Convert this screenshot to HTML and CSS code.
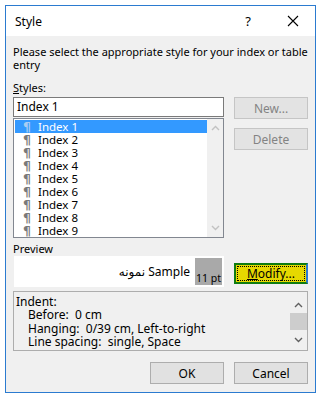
FILE: index.html
```html
<!DOCTYPE html>
<html lang="en">
<head>
    <meta charset="UTF-8">
    <meta name="viewport" content="width=device-width, initial-scale=1.0">
    <title>Style</title>
    <link rel="stylesheet" href="styles.css">
</head>
<body>
    <div class="window">
        <div class="titlebar">
            <span class="title">Style</span>
            <span class="help">?</span>
            <span class="close">
                <svg width="12" height="12" viewBox="0 0 12 12"><path d="M1 1L11 11M11 1L1 11" stroke="#000" stroke-width="1.1" fill="none"/></svg>
            </span>
        </div>
        <div class="dialog">
            <p class="intro">Please select the appropriate style for your index or table entry</p>
            <div class="label"><u>S</u>tyles:</div>
            <div class="styles-row">
                <div class="styles-col">
                    <div class="input">Index 1</div>
                    <div class="listbox">
                        <ul class="list">
                            <li class="selected"><span class="pil">¶</span>Index 1</li>
                            <li><span class="pil">¶</span>Index 2</li>
                            <li><span class="pil">¶</span>Index 3</li>
                            <li><span class="pil">¶</span>Index 4</li>
                            <li><span class="pil">¶</span>Index 5</li>
                            <li><span class="pil">¶</span>Index 6</li>
                            <li><span class="pil">¶</span>Index 7</li>
                            <li><span class="pil">¶</span>Index 8</li>
                            <li><span class="pil">¶</span>Index 9</li>
                        </ul>
                        <div class="vscroll off">
                            <svg width="9" height="6" viewBox="0 0 9 6"><path d="M1 5L4.5 1.5L8 5" stroke="currentColor" stroke-width="1.4" fill="none"/></svg>
                            <svg width="9" height="6" viewBox="0 0 9 6"><path d="M1 1L4.5 4.5L8 1" stroke="currentColor" stroke-width="1.4" fill="none"/></svg>
                        </div>
                    </div>
                </div>
                <div class="side-buttons">
                    <button class="btn" disabled>New...</button>
                    <button class="btn" disabled>Delete</button>
                </div>
            </div>
            <div class="label preview-label">Preview</div>
            <div class="preview-row">
                <div class="preview">
                    <div class="preview-text">نمونه Sample</div>
                    <div class="size">11 pt</div>
                </div>
                <button class="btn modify"><span class="focus"><u>M</u>odify...</span></button>
            </div>
            <div class="desc">
                <div class="desc-text">
                    <div>Indent:</div>
                    <div class="ind">Before:&nbsp; 0 cm</div>
                    <div class="ind">Hanging:&nbsp; 0/39 cm, Left-to-right</div>
                    <div class="ind">Line spacing:&nbsp; single, Space</div>
                </div>
                <div class="vscroll on">
                    <svg width="9" height="6" viewBox="0 0 9 6"><path d="M1 5L4.5 1.5L8 5" stroke="currentColor" stroke-width="1.4" fill="none"/></svg>
                    <div class="thumb"></div>
                    <svg width="9" height="6" viewBox="0 0 9 6"><path d="M1 1L4.5 4.5L8 1" stroke="currentColor" stroke-width="1.4" fill="none"/></svg>
                </div>
            </div>
            <div class="actions">
                <button class="btn">OK</button>
                <button class="btn">Cancel</button>
            </div>
        </div>
    </div>
</body>
</html>
```

FILE: styles.css
```css
body {
    margin: 0;
    background-color: #fff;
    font-family: "Noto Sans", "DejaVu Sans", sans-serif;
    font-size: 11px;
    color: #000;
}
.window {
    margin: 5px 0 0 5px;
    width: 309px;
    border: 1px solid #2b7bd0;
}
.titlebar {
    height: 30px;
    background-color: #fff;
    display: flex;
    align-items: center;
    padding-left: 9px;
    font-size: 12px;
}
.title {
    flex: 1;
}
.help {
    width: 12px;
    margin-right: 33px;
    text-align: center;
    font-size: 13px;
}
.close {
    display: flex;
    width: 12px;
    margin-right: 16px;
}
.dialog {
    background-color: #f0f0f0;
    padding: 9px 7px 8px 7px;
}
.intro {
    margin: 0;
    line-height: 13px;
}
.label {
    margin-top: 10px;
    line-height: 13px;
}
.styles-row {
    display: flex;
    gap: 10px;
    margin-top: 3px;
}
.styles-col {
    width: 211px;
}
.input {
    height: 20px;
    box-sizing: border-box;
    border: 1px solid #7a7a7a;
    background-color: #fff;
    padding-left: 3px;
    line-height: 18px;
    font-size: 12px;
}
.listbox {
    margin-top: 1px;
    height: 120px;
    box-sizing: border-box;
    border: 1px solid #828790;
    background-color: #fff;
    display: flex;
}
.list {
    list-style: none;
    margin: 0;
    padding: 1px 0 0 1px;
    flex: 1;
}
.list li {
    height: 13px;
    line-height: 13px;
    font-size: 11.5px;
    display: flex;
    overflow: hidden;
}
.list li.selected {
    background-color: #3399ff;
    color: #fff;
}
.pil {
    width: 10px;
    margin: 0 5px 0 8px;
    color: #7a7a7a;
    font-family: "DejaVu Sans", sans-serif;
    font-weight: bold;
    font-size: 12.5px;
}
.selected .pil {
    color: #a9cdf2;
}
.vscroll {
    width: 16px;
    display: flex;
    flex-direction: column;
    align-items: center;
    justify-content: space-between;
    padding: 6px 0;
    box-sizing: border-box;
    background-color: #f0f0f0;
}
.vscroll.off {
    color: #c2c2c2;
}
.vscroll.on {
    color: #606060;
    padding: 10px 0 7px;
    width: 17px;
}
.thumb {
    width: 17px;
    height: 17px;
    background-color: #cdcdcd;
    margin: -2px 0 0;
    flex: none;
}
.side-buttons {
    display: flex;
    flex-direction: column;
    gap: 9px;
}
.btn {
    width: 74px;
    height: 22px;
    box-sizing: border-box;
    border: 1px solid #adadad;
    background-color: #e1e1e1;
    font-family: inherit;
    font-size: 12px;
    color: #000;
    padding: 0;
}
.btn:disabled {
    border-color: #c5c5c5;
    background-color: #e3e3e3;
    color: #838383;
}
.preview-label {
    margin-top: 4px;
}
.preview-row {
    display: flex;
    align-items: center;
    gap: 10px;
    margin-top: 1px;
    padding-left: 1px;
}
.preview {
    width: 210px;
    height: 31px;
    box-sizing: border-box;
    border: 2px solid #fff;
    background-color: #fff;
    display: flex;
}
.preview-text {
    flex: 1;
    text-align: right;
    padding-right: 5px;
    line-height: 27px;
    font-size: 12px;
}
.size {
    width: 27px;
    background-color: #a9a9a9;
    font-size: 10.5px;
    line-height: 10px;
    padding-top: 15px;
    box-sizing: border-box;
    text-align: center;
}
.modify {
    border: 2px solid #0f7b0f;
    border-right-color: #2a7ad2;
    background-color: #e6d800;
    padding: 1px;
    margin-top: 3px;
    height: 21px;
}
.focus {
    display: block;
    height: 100%;
    box-sizing: border-box;
    border: 1px dotted #000;
    line-height: 13px;
}
.desc {
    margin-top: 4px;
    height: 60px;
    box-sizing: border-box;
    border: 1px solid #adadad;
    display: flex;
}
.desc-text {
    flex: 1;
    padding: 3px 0 0 2px;
    line-height: 13.3px;
    font-size: 12px;
}
.ind {
    padding-left: 12px;
}
.actions {
    margin-top: 11px;
    display: flex;
    justify-content: flex-end;
    gap: 10px;
}
```
